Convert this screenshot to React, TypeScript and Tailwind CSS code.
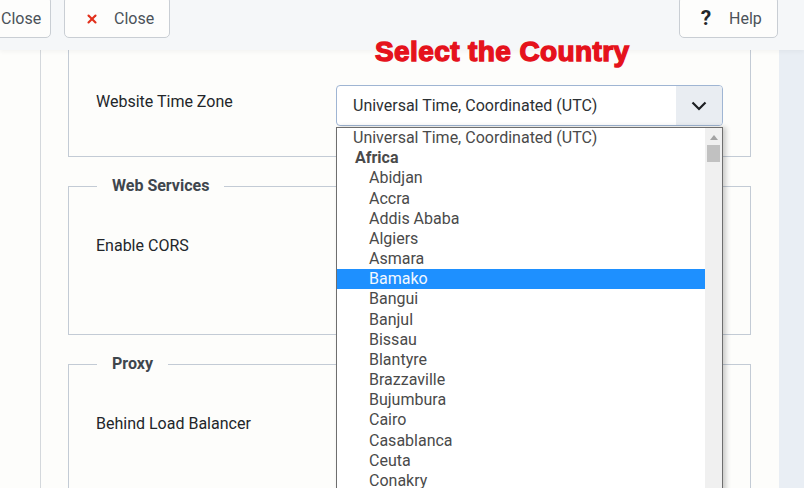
import { X } from 'lucide-react'

const zones = [
  'Abidjan', 'Accra', 'Addis Ababa', 'Algiers', 'Asmara', 'Bamako', 'Bangui', 'Banjul', 'Bissau',
  'Blantyre', 'Brazzaville', 'Bujumbura', 'Cairo', 'Casablanca', 'Ceuta', 'Conakry',
]

const Btn = ({ children, className = '' }: { children: React.ReactNode; className?: string }) => (
  <button className={`h-[42px] -mt-[4px] pt-[4px] flex items-center border border-[#c9ced4] rounded-[5px] bg-[#fdfdfc] text-[16px] text-[#4b5259] ${className}`}>
    {children}
  </button>
)

const App = () => {
  return (
    <div className="relative w-[804px] h-[488px] overflow-hidden bg-[#fdfdfb] font-['Roboto',sans-serif]">
      {/* toolbar */}
      <div className="h-[50px] flex items-start justify-between bg-[#f5f7f9] shadow-[0_2px_4px_rgba(0,0,0,0.04)] relative z-10">
        <div className="flex">
          <Btn className="w-[80px] -ml-[29px] pl-[29px]">Close</Btn>
          <Btn className="ml-[13px] w-[106px] pl-[20px]">
            <X size={14} strokeWidth={3.6} className="text-[#e2301c]" />
            <span className="ml-[15px]">Close</span>
          </Btn>
        </div>
        <Btn className="mr-[26px] w-[99px] pl-[20px]">
          <span className="font-bold text-[21px] text-[#22262a] w-[12px]">?</span>
          <span className="ml-[17px]">Help</span>
        </Btn>
      </div>

      {/* annotation over the screenshot */}
      <span className="absolute left-[375px] top-[38px] z-30 text-[28px] leading-none font-bold tracking-[0.4px] text-[#e5121c] [-webkit-text-stroke:1.4px_#e5121c] font-['Liberation_Sans',sans-serif]">
        Select the Country
      </span>

      {/* body */}
      <div className="flex h-[438px]">
        <div className="w-[40px] bg-[#fdfdfb]" />
        <div className="w-[739px] border-l border-[#d4d8dc] pl-[27px] pr-[28px] text-[16px] text-[#22262a]">
          <div className="h-[107px] border-x border-b border-[#c3cbd5] flex items-start pt-[35px]">
            <span className="ml-[27px] w-[240px] leading-[34px]">Website Time Zone</span>
            <div className="w-[387px] h-[41px] flex items-center border border-[#9fb5d3] rounded-[4px] overflow-hidden bg-white">
              <span className="flex-1 pl-[16px] text-[#2c3034]">Universal Time, Coordinated (UTC)</span>
              <span className="w-[46px] h-full flex items-center justify-center bg-[#e9edf2]">
                <svg width="16" height="10" viewBox="0 0 16 10">
                  <path d="M1.5 1.5 L8 8 L14.5 1.5" fill="none" stroke="#1c1f22" strokeWidth="2.2" />
                </svg>
              </span>
            </div>
          </div>

          <fieldset className="mt-[16px] h-[162px] border border-[#c3cbd5]">
            <legend className="ml-[28px] px-[15px] h-[26px] leading-[26px] font-bold text-[#3f464d]">Web Services</legend>
            <div className="ml-[27px] mt-[35px] leading-[24px]">Enable CORS</div>
          </fieldset>

          <fieldset className="mt-[16px] h-[200px] border border-[#c3cbd5]">
            <legend className="ml-[28px] px-[15px] h-[26px] leading-[26px] font-bold text-[#3f464d]">Proxy</legend>
            <div className="ml-[27px] mt-[35px] leading-[24px]">Behind Load Balancer</div>
          </fieldset>
        </div>
        <div className="flex-1 bg-[#e9eef4]" />
      </div>

      {/* open dropdown list */}
      <div className="absolute left-[336px] top-[127px] w-[387px] h-[380px] flex bg-white border border-[#6e6e6e] shadow-[3px_0_5px_rgba(0,0,0,0.2)] z-20 text-[16px] text-[#4a4a4a]">
        <div className="flex-1">
          <div className="h-[20.18px] leading-[20px] pl-[16px]">Universal Time, Coordinated (UTC)</div>
          <div className="h-[20.18px] leading-[20px] pl-[18px] font-bold">Africa</div>
          {zones.map((z) => (
            <div
              key={z}
              className={`h-[20.18px] leading-[20px] pl-[32px] ${z === 'Bamako' ? 'bg-[#1e90ff] text-[#f2f8ff]' : ''}`}
            >
              {z}
            </div>
          ))}
        </div>
        <div className="w-[17px] bg-[#f0f0f0] flex flex-col items-center">
          <svg width="8" height="5" viewBox="0 0 8 5" className="mt-[7px]">
            <path d="M0 5 L4 0 L8 5 Z" fill="#a3a3a3" />
          </svg>
          <div className="mt-[5px] w-[13px] h-[17px] bg-[#c1c1c1]" />
        </div>
      </div>
    </div>
  )
}

export default App
